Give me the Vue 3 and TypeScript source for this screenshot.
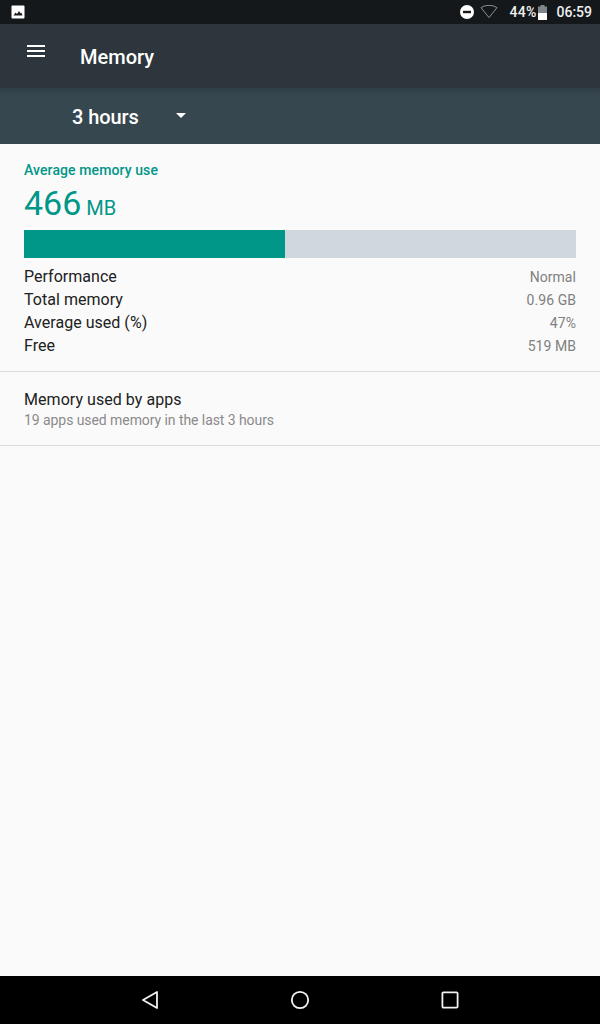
<script setup lang="ts">
const rows: [string, string][] = [
  ['Performance', 'Normal'],
  ['Total memory', '0.96 GB'],
  ['Average used (%)', '47%'],
  ['Free', '519 MB'],
]
</script>

<template>
  <div class="screen">
    <div class="status">
      <svg class="pic" width="14" height="14" viewBox="0 0 14 14">
        <rect x="0.5" y="0.5" width="13" height="13" rx="1" fill="#fff" />
        <path d="M2.5 10.5 L4.6 7.5 L6 9 L8 6 L9.5 8.2 L10.3 7.4 L11.6 10.5 Z" fill="#1a1e21" />
      </svg>
      <div class="status-right">
        <svg class="dnd" width="16" height="16" viewBox="0 0 16 16">
          <circle cx="8" cy="8" r="7" fill="#fff" />
          <rect x="4" y="6.8" width="8" height="2.4" fill="#14181b" />
        </svg>
        <svg class="wifi" width="18" height="14" viewBox="0 0 18 14">
          <path d="M1 2.6 C6 -0.4 12 -0.4 17 2.6 L9 12.6 Z" fill="none" stroke="#8b9093" stroke-width="1" />
        </svg>
        <span class="pct">44%</span>
        <svg class="batt" width="9" height="15" viewBox="0 0 9 15">
          <rect x="2.5" y="0" width="4" height="2" fill="#80868a" />
          <rect x="0" y="1.5" width="9" height="6.5" fill="#80868a" />
          <rect x="0" y="8" width="9" height="7" fill="#fff" />
        </svg>
        <span class="time">06:59</span>
      </div>
    </div>

    <div class="toolbar">
      <div class="menu"><i></i><i></i><i></i></div>
      <span class="title">Memory</span>
    </div>

    <div class="spinner">
      <span class="range">3 hours</span>
      <span class="caret"></span>
    </div>

    <main class="content">
      <section class="summary">
        <div class="label">Average memory use</div>
        <div class="value"><span class="num">466</span><span class="unit">MB</span></div>
        <div class="bar"><div class="fill" :style="{ width: '47.2%' }"></div></div>
        <div class="rows">
          <div v-for="r in rows" :key="r[0]" class="row">
            <span class="k">{{ r[0] }}</span>
            <span class="v">{{ r[1] }}</span>
          </div>
        </div>
      </section>
      <section class="apps">
        <div class="apps-title">Memory used by apps</div>
        <div class="apps-sub">19 apps used memory in the last 3 hours</div>
      </section>
    </main>

    <nav class="nav">
      <svg width="18" height="20" viewBox="0 0 18 20">
        <path d="M16 2 L2 10 L16 18 Z" fill="none" stroke="#f2f2f2" stroke-width="1.8" stroke-linejoin="round" />
      </svg>
      <svg width="20" height="20" viewBox="0 0 20 20">
        <circle cx="10" cy="10" r="8.2" fill="none" stroke="#f2f2f2" stroke-width="1.8" />
      </svg>
      <svg width="18" height="18" viewBox="0 0 18 18">
        <rect x="1.4" y="1.4" width="15.2" height="15.2" rx="1" fill="none" stroke="#f2f2f2" stroke-width="1.8" />
      </svg>
    </nav>
  </div>
</template>

<style>
html, body { margin: 0; padding: 0; }
</style>

<style scoped>
.screen {
  width: 600px;
  height: 1024px;
  display: flex;
  flex-direction: column;
  background: #fafafa;
  font-family: Roboto, "Liberation Sans", sans-serif;
  overflow: hidden;
}
.status {
  height: 24px;
  flex: none;
  background: #14181b;
  color: #fff;
  display: flex;
  align-items: center;
  justify-content: space-between;
  padding: 0 8px 0 11px;
  box-sizing: border-box;
}
.status-right { display: flex; align-items: center; }
.dnd { margin-right: 5px; }
.wifi { margin-right: 11px; }
.pct, .time { font-size: 14px; font-weight: 500; color: #f0f0f0; }
.pct { letter-spacing: 0.25px; }
.batt { margin: 0 9px 0 2px; }
.toolbar {
  height: 64px;
  flex: none;
  background: #2c363c;
  display: flex;
  align-items: center;
  color: #fff;
}
.menu {
  width: 18px;
  margin-left: 27px;
  margin-top: -10px;
  display: flex;
  flex-direction: column;
  gap: 3px;
}
.menu i { display: block; height: 2px; background: #fff; }
.title {
  margin-left: 35px;
  font-size: 20px;
  font-weight: 500;
  margin-top: 1px;
}
.spinner {
  height: 56px;
  flex: none;
  box-sizing: border-box;
  background: #37474f;
  box-shadow: inset 0 6px 6px -4px rgba(0, 0, 0, 0.18);
  display: flex;
  align-items: center;
  color: #fff;
  padding-left: 72px;
}
.range { font-size: 20px; font-weight: 500; width: 104px; margin-top: 2px; letter-spacing: -0.1px; }
.caret {
  width: 0;
  height: 0;
  border-left: 5px solid transparent;
  border-right: 5px solid transparent;
  border-top: 5px solid #fff;
  margin-top: -2px;
}
.content { flex: 1; min-height: 0; }
.summary {
  padding: 18px 24px 14px;
  border-bottom: 1px solid #dcdcdc;
}
.label {
  font-size: 14px;
  line-height: 16px;
  font-weight: 500;
  color: #009688;
  letter-spacing: 0.1px;
}
.value {
  color: #009688;
  margin-top: 7px;
  height: 37px;
  line-height: 37px;
  white-space: nowrap;
}
.num { font-size: 34px; }
.unit { font-size: 20px; margin-left: 5px; }
.bar {
  margin-top: 8px;
  height: 28px;
  background: #cfd8dc;
}
.fill { height: 100%; background: #009688; }
.rows { margin-top: 7px; }
.row {
  height: 23px;
  display: flex;
  justify-content: space-between;
  align-items: center;
}
.k { font-size: 16px; color: #212121; letter-spacing: 0.03px; }
.v { font-size: 14px; color: #808080; letter-spacing: 0.05px; }
.apps {
  height: 74px;
  box-sizing: border-box;
  padding-top: 18px;
  padding-left: 24px;
  border-bottom: 1px solid #dcdcdc;
}
.apps-title { font-size: 16px; line-height: 20px; color: #212121; letter-spacing: 0.05px; }
.apps-sub { font-size: 14px; line-height: 20px; color: #8a8a8a; letter-spacing: -0.07px; }
.nav {
  height: 48px;
  flex: none;
  background: #000;
  display: flex;
  align-items: center;
  justify-content: space-between;
  padding: 0 141px;
}
</style>
